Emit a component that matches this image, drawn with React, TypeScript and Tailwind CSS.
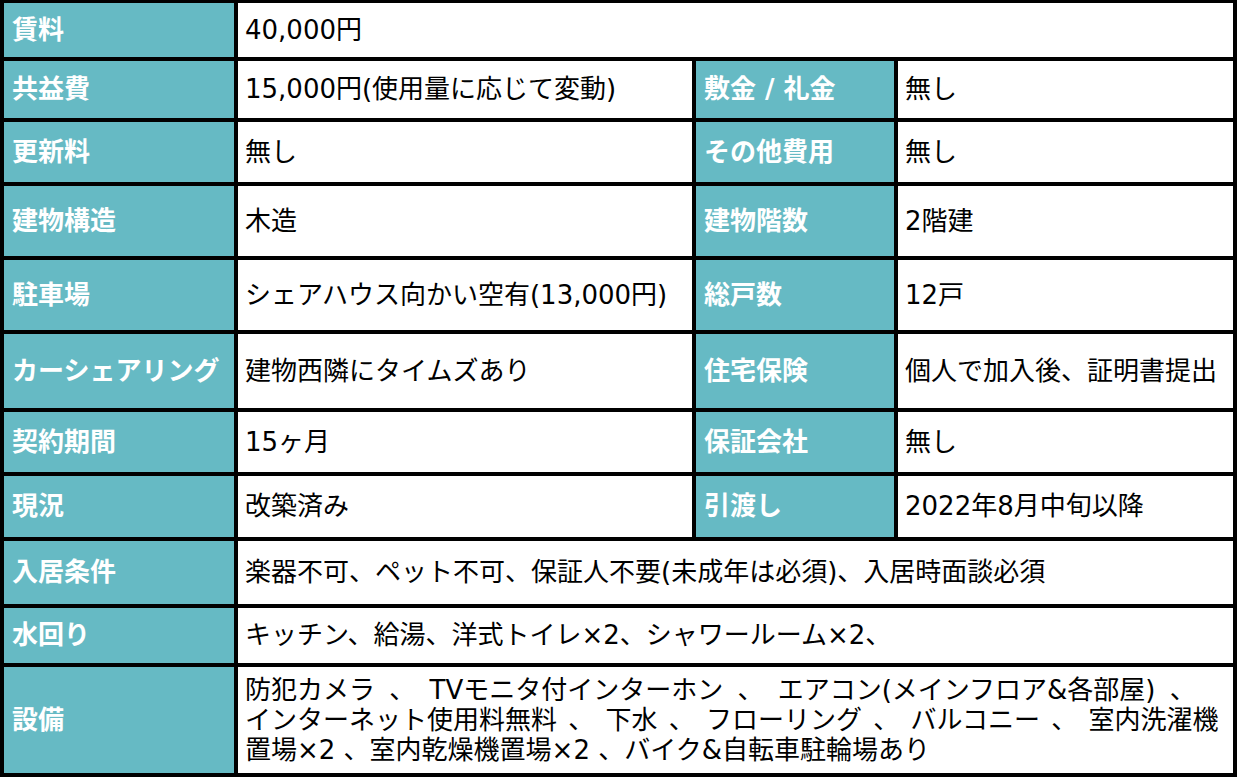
import React from "react";

type Cell = { label: string; value: React.ReactNode };
type Row = { left: Cell; right?: Cell };

const rows: Row[] = [
  { left: { label: "賃料", value: "40,000円" } },
  {
    left: { label: "共益費", value: "15,000円(使用量に応じて変動)" },
    right: { label: "敷金 / 礼金", value: "無し" },
  },
  {
    left: { label: "更新料", value: "無し" },
    right: { label: "その他費用", value: "無し" },
  },
  {
    left: { label: "建物構造", value: "木造" },
    right: { label: "建物階数", value: "2階建" },
  },
  {
    left: { label: "駐車場", value: "シェアハウス向かい空有(13,000円)" },
    right: { label: "総戸数", value: "12戸" },
  },
  {
    left: { label: "カーシェアリング", value: "建物西隣にタイムズあり" },
    right: { label: "住宅保険", value: "個人で加入後、証明書提出" },
  },
  {
    left: { label: "契約期間", value: "15ヶ月" },
    right: { label: "保証会社", value: "無し" },
  },
  {
    left: { label: "現況", value: "改築済み" },
    right: { label: "引渡し", value: "2022年8月中旬以降" },
  },
  {
    left: {
      label: "入居条件",
      value: "楽器不可、ペット不可、保証人不要(未成年は必須)、入居時面談必須",
    },
  },
  {
    left: {
      label: "水回り",
      value: "キッチン、給湯、洋式トイレ×2、シャワールーム×2、",
    },
  },
  {
    left: {
      label: "設備",
      value: (
        <div className="flex flex-col">
          <div className="h-[30px] leading-[30px] [word-spacing:6px]">
            防犯カメラ 、 TVモニタ付インターホン 、 エアコン(メインフロア&amp;各部屋) 、
          </div>
          <div className="h-[30px] leading-[30px] [word-spacing:3px]">
            インターネット使用料無料 、 下水 、 フローリング 、 バルコニー 、 室内洗濯機
          </div>
          <div className="h-[30px] leading-[30px]">
            置場×2 、室内乾燥機置場×2 、バイク&amp;自転車駐輪場あり
          </div>
        </div>
      ),
    },
  },
];

function Label({ children }: { children: React.ReactNode }) {
  return (
    <div className="flex items-center bg-[#66bac4] pl-[8px] text-[26px] font-semibold text-white whitespace-nowrap">
      {children}
    </div>
  );
}

function Value({ children, wide }: { children: React.ReactNode; wide?: boolean }) {
  return (
    <div
      className={
        "flex items-center bg-white pl-[7px] text-[26px] text-black whitespace-nowrap " +
        (wide ? "col-span-3" : "")
      }
    >
      {children}
    </div>
  );
}

export default function App() {
  return (
    <div
      className="min-h-[778px] w-[1240px] bg-white"
      style={{ fontFamily: '"DejaVu Sans", "Noto Sans CJK JP", sans-serif' }}
    >
      <div className="grid w-[1237px] grid-cols-[230px_454px_198px_335px] grid-rows-[54px_57px_60px_70px_70px_74px_60px_61px_63px_55px_106px] gap-[4px] bg-black px-[4px] pt-[3px] pb-[4px]">
        {rows.map((r, i) => (
          <React.Fragment key={i}>
            <Label>{r.left.label}</Label>
            <Value wide={!r.right}>{r.left.value}</Value>
            {r.right && (
              <>
                <Label>{r.right.label}</Label>
                <Value>{r.right.value}</Value>
              </>
            )}
          </React.Fragment>
        ))}
      </div>
    </div>
  );
}
